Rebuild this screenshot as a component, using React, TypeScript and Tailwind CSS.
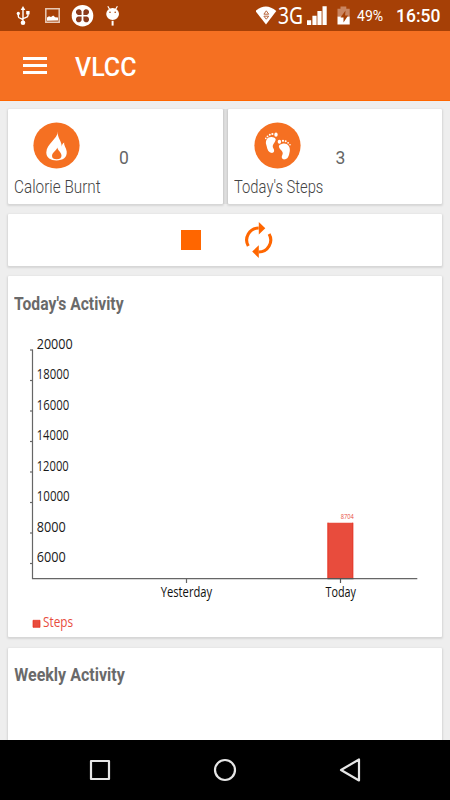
import type { ReactNode } from "react";

const yLabels = [
  { v: "20000", w: 36 },
  { v: "18000", w: 32.5 },
  { v: "16000", w: 32.5 },
  { v: "14000", w: 32 },
  { v: "12000", w: 32 },
  { v: "10000", w: 33 },
  { v: "8000", w: 29 },
  { v: "6000", w: 29 },
];

function StatusBar() {
  return (
    <header className="flex h-[31px] shrink-0 items-center bg-[#a64006] text-white">
      <svg className="h-[31px] w-[256px] shrink-0" viewBox="0 0 256 31" fill="none">
        <g stroke="#fff" strokeWidth="1.4">
          <path d="M23 9v14M18.3 14v2.2q0 1.6 2.2 2.2l2.5 1.2M28 13v2.4q0 1.5-2.4 2.2L23 18.6" />
        </g>
        <g fill="#fff">
          <path d="M23 6l2.3 4h-4.6z" />
          <circle cx="18.3" cy="13.4" r="1.6" />
          <path d="M26.2 11h3.4v3.4h-3.4z" />
          <circle cx="23" cy="22.8" r="2.3" />
        </g>
        <path d="M45.8 8.8h13.4v13.4H45.8z" stroke="#e8c9b6" strokeWidth="1.5" />
        <path d="M47 20.7v-3.2l2-1.2 2 .8 2.2-1.6 2 1.8 2.8.3v2.9z" fill="#fff" />
        <circle cx="82.5" cy="15.7" r="10.8" fill="#fff" />
        <g fill="#8a3a1c">
          <path d="M81.6 14.9h-3.6a2.9 2.9 0 1 1 3.6-3.6zM83.4 14.9h3.6a2.9 2.9 0 1 0-3.6-3.6zM81.6 16.6h-3.6a2.9 2.9 0 1 0 3.6 3.6zM83.4 16.6h3.6a2.9 2.9 0 1 1-3.6 3.6z" />
        </g>
        <g fill="#fff">
          <ellipse cx="112.6" cy="14" rx="6.4" ry="5.9" />
          <path d="M111.6 20.8h2v4.8h-2z" />
        </g>
        <path d="M109.6 9.2L107.8 6.2M115.6 9.2l1.8-3" stroke="#fff" strokeWidth="1.2" />
        <circle cx="110" cy="12.3" r=".8" fill="#a64006" />
        <circle cx="115.2" cy="12.3" r=".8" fill="#a64006" />
      </svg>
      <svg className="h-[31px] w-[22px] shrink-0" viewBox="256 0 22 31">
        <path d="M255.5 11Q265.8 1.8 276.3 11L266 24.4z" fill="#fff" />
        <path d="M266.3 10.8l2.4 3.4h-4.8zM263.9 16.2h4.8l-2.4 3z" fill="#fff" stroke="#b8683f" strokeWidth="1" />
      </svg>
      <span className="w-[29px] shrink-0 origin-left scale-x-[0.82] whitespace-nowrap font-['Noto_Sans',sans-serif] text-[23.5px] leading-[31px]">3G</span>
      <svg className="h-[31px] w-[47px] shrink-0" viewBox="307 0 47 31" fill="#fff">
        <path d="M307 20.3h4.2V25H307zM312.4 15.8h4.2V25h-4.2zM317.4 11h4.2v14h-4.2zM322.5 6.3h4.2V25h-4.2z" />
        <path d="M337.5 8.7h3V6.5h5.8v2.2h3.4v7.8h-12.2z" fill="#c98561" />
        <path d="M337.5 16.5h12.2v8h-12.2z" />
        <path d="M345.5 10.5l-5 7h3v5l4.6-7h-3z" fill="#a64006" />
      </svg>
      <span className="mt-[2px] w-[42px] shrink-0 origin-left translate-x-[3px] scale-x-[0.94] font-['Roboto',sans-serif] text-[15px]">49%</span>
      <span className="mt-[2px] whitespace-nowrap font-['Roboto',sans-serif] text-[17.5px] font-medium">16:50</span>
    </header>
  );
}

function Card({ className, children }: { className: string; children?: ReactNode }) {
  return (
    <section className={`shrink-0 rounded-[1px] bg-white shadow-[0_1px_2px_1px_rgba(0,0,0,0.1)] ${className}`}>
      {children}
    </section>
  );
}

function Flame() {
  return (
    <svg className="size-[47px]" viewBox="0 0 47 47">
      <circle cx="23.5" cy="23.5" r="23.1" fill="#f57022" />
      <path d="M24.8 9.5C24.6 17 13.5 21.5 13.3 30.5C13.2 35.7 17.8 38.5 23.5 38.5C30 38.5 34.2 35.5 33.7 29.6C33.3 25.5 30.6 23.5 31.2 20.5C29.6 21.4 29 23 28.6 24.5C29.2 20 24 15.5 24.8 9.5z" fill="#fff" />
      <path d="M24.3 25.4C23.8 28.5 19 30 19 34C19 36.2 21 37.3 23.7 37.3C26.5 37.3 28.5 36.2 28.5 33.8C28.5 30 25 28.8 24.3 25.4z" fill="#f57022" />
    </svg>
  );
}

function Footprints() {
  return (
    <svg className="size-[47px]" viewBox="0 0 47 47">
      <circle cx="23.5" cy="23.5" r="23.1" fill="#f57022" />
      <g fill="#fff">
        <path d="M18.8 15.2C14 14 11 18 12.2 22.6C13.2 26 13.6 30 17 30.8C20 31.4 21 28.8 19.3 26.2C17.3 22.8 21.5 20.5 21.7 17.5C21.7 16.2 20.3 15.4 18.8 15.2z" />
        <ellipse cx="22" cy="12.7" rx="1.7" ry="2.1" />
        <circle cx="18.4" cy="12" r="1.1" />
        <circle cx="15.8" cy="12.7" r="1" />
        <circle cx="13.5" cy="14.3" r=".9" />
        <circle cx="11.8" cy="16.4" r=".8" />
        <path d="M28.3 21.8C33 20.6 36.5 24.2 35.8 29C35.2 32.4 34.6 36.5 31.3 37.3C28.3 38 26.9 35.7 28.4 32.8C30.2 29.4 25.3 28 24.9 24.6C24.8 23 26.5 22.2 28.3 21.8z" />
        <ellipse cx="25.4" cy="19.7" rx="1.7" ry="2" />
        <circle cx="29" cy="18.8" r="1.1" />
        <circle cx="31.7" cy="19.3" r="1" />
        <circle cx="34.1" cy="20.8" r=".9" />
        <circle cx="36" cy="22.8" r=".8" />
      </g>
    </svg>
  );
}

function Chart() {
  return (
    <svg className="block h-[317px] w-[434px] font-['Open_Sans',sans-serif]" viewBox="8 320 434 317">
      <g stroke="#666" strokeWidth="1.2">
        <path d="M32.5 349.5V578.6H417.3" fill="none" />
        {yLabels.map((l, i) => (
          <path key={l.v} d={`M30 ${350 + i * 30.5}h2.5`} />
        ))}
        <path d="M186.5 579v4" />
      </g>
      {yLabels.map((l, i) => (
        <text key={l.v} x="36.7" y={348.7 + i * 30.5} fontSize="14" fill="#1a1a1a" textLength={l.w} lengthAdjust="spacingAndGlyphs">
          {l.v}
        </text>
      ))}
      <path d="M327.5 522.7h25.6v55.6h-25.6z" fill="#e84c3d" />
      <path d="M328 522.7v55.6M352.8 522.7v55.6" stroke="#e63a2b" strokeWidth="1" />
      <path d="M327.5 578.6h26M340.5 579v4" stroke="#555" strokeWidth="1.2" />
      <text x="340.7" y="519.2" fontSize="7" fill="#e84c3d" textLength="13" lengthAdjust="spacingAndGlyphs">8704</text>
      <text x="160.7" y="597" fontSize="14" fill="#111" textLength="51.5" lengthAdjust="spacingAndGlyphs">Yesterday</text>
      <text x="325.5" y="597" fontSize="14" fill="#111" textLength="30.5" lengthAdjust="spacingAndGlyphs">Today</text>
      <path d="M33 620.3h7v7h-7z" fill="#e84c3d" stroke="#e8291a" strokeWidth=".7" />
      <text x="43" y="627.2" fontSize="14" fill="#e84c3d" textLength="30" lengthAdjust="spacingAndGlyphs">Steps</text>
    </svg>
  );
}

export default function App() {
  return (
    <div className="flex h-[800px] w-[450px] flex-col overflow-hidden bg-[#eee] font-['Roboto',sans-serif]">
      <StatusBar />
      <div className="flex h-[70px] shrink-0 items-center border-b border-[#ff6600] bg-[#f57022] pl-[23px]">
        <div className="flex w-6 flex-col gap-[4.5px]">
          <span className="h-[2.5px] bg-white" />
          <span className="h-[2.5px] bg-white" />
          <span className="h-[2.5px] bg-white" />
        </div>
        <h1 className="ml-7 mt-[5px] text-[25px] font-medium leading-[30px] text-white">VLCC</h1>
      </div>
      <main className="flex min-h-0 grow flex-col overflow-hidden px-2 pt-2">
        <div className="flex w-[433.5px] shrink-0 gap-[5px] bg-[#e0e0e0]">
          <Card className="h-[95px] w-[214.5px] pl-[6px] pt-[13px]">
            <div className="flex h-[47px] items-center pl-[19px]">
              <Flame />
              <span className="ml-[39px] mt-[25px] text-[17.5px] text-[#666]">0</span>
            </div>
            <p className="mt-[6px] w-[120px] origin-left scale-x-[0.85] whitespace-nowrap text-[18px] font-light leading-6 text-[#444]">Calorie Burnt</p>
          </Card>
          <Card className="h-[95px] w-[214px] pl-[6px] pt-[13px]">
            <div className="flex h-[47px] items-center pl-[20.5px]">
              <Footprints />
              <span className="ml-[34.5px] mt-[25px] text-[17.5px] text-[#666]">3</span>
            </div>
            <p className="mt-[6px] w-[120px] origin-left scale-x-[0.82] whitespace-nowrap text-[18px] font-light leading-6 text-[#444]">Today's Steps</p>
          </Card>
        </div>
        <Card className="mt-[10px] flex h-[52px] items-center">
          <span className="ml-[173px] size-5 bg-[#ff6600]" />
          <svg className="ml-[41px] h-[38px] w-[32px]" viewBox="242 221 32 38" fill="none">
            <path d="M248.3 246A12 12 0 0 1 258.7 228" stroke="#ff6600" strokeWidth="3.1" />
            <path d="M269.1 234A12 12 0 0 1 258.7 252" stroke="#ff6600" strokeWidth="3.1" />
            <path d="M258.8 222v12.6l6.5-6.3zM258.8 245.2v12.9l-6.6-6.5z" fill="#ff6600" />
          </svg>
        </Card>
        <Card className="mt-[10px] h-[361px]">
          <h2 className="h-[44px] origin-left scale-x-[0.87] pl-[7px] pt-[16px] text-[18px] font-bold leading-6 text-[#6a6a6a]">Today's Activity</h2>
          <Chart />
        </Card>
        <Card className="mt-[11px] h-[110px]">
          <h2 className="origin-left scale-x-[0.89] pl-[7px] pt-[15px] text-[18px] font-bold leading-6 text-[#6a6a6a]">Weekly Activity</h2>
        </Card>
      </main>
      <nav className="h-[60px] shrink-0 bg-black">
        <svg className="block h-[60px] w-[450px]" viewBox="0 740 450 60" fill="none" stroke="#e6e6e6" strokeWidth="2.2" strokeLinejoin="round">
          <path d="M91 761h18v18H91z" />
          <circle cx="225" cy="770" r="10" />
          <path d="M341 770l18-10.5v21z" />
        </svg>
      </nav>
    </div>
  );
}
